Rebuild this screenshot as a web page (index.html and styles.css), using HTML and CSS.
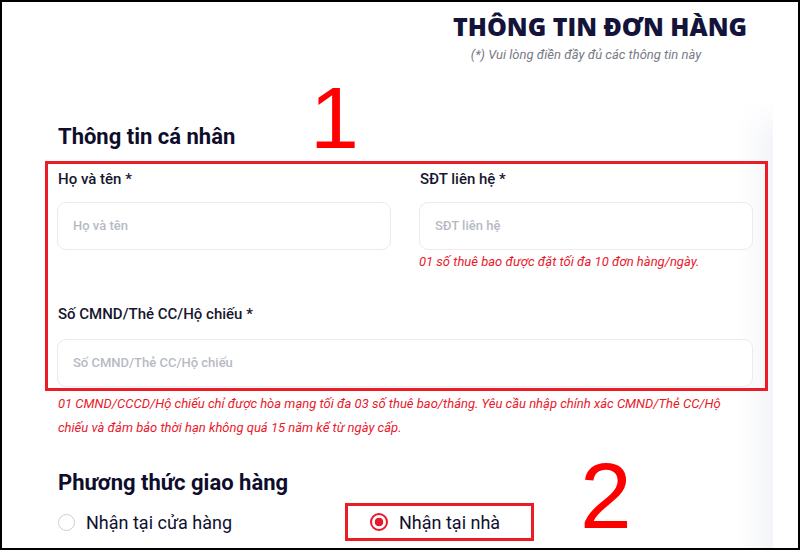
FILE: index.html
```html
<!DOCTYPE html>
<html lang="vi">
<head>
<meta charset="utf-8">
<title>Thông tin đơn hàng</title>
<link rel="stylesheet" href="styles.css">
</head>
<body>
<div class="frame">
  <header class="head">
    <h1 class="title">THÔNG TIN ĐƠN HÀNG</h1>
    <p class="subtitle">(*) Vui lòng điền đầy đủ các thông tin này</p>
  </header>
  <main class="card">
    <h2 class="section-title">Thông tin cá nhân</h2>
    <div class="box-personal">
      <div class="fields">
        <div class="field">
          <label class="label">Họ và tên *</label>
          <div class="input">Họ và tên</div>
        </div>
        <div class="field">
          <label class="label">SĐT liên hệ *</label>
          <div class="input">SĐT liên hệ</div>
          <p class="note">01 số thuê bao được đặt tối đa 10 đơn hàng/ngày.</p>
        </div>
        <div class="field field-wide">
          <label class="label">Số CMND/Thẻ CC/Hộ chiếu *</label>
          <div class="input">Số CMND/Thẻ CC/Hộ chiếu</div>
        </div>
      </div>
    </div>
    <p class="note note-id">01 CMND/CCCD/Hộ chiếu chỉ được hòa mạng tối đa 03 số thuê bao/tháng. Yêu cầu nhập chính xác CMND/Thẻ CC/Hộ chiếu và đảm bảo thời hạn không quá 15 năm kể từ ngày cấp.</p>
    <h2 class="section-title section-ship">Phương thức giao hàng</h2>
    <div class="options">
      <div class="option option-store"><span class="radio"></span><span>Nhận tại cửa hàng</span></div>
      <div class="option option-home"><span class="radio radio-on"></span><span>Nhận tại nhà</span></div>
    </div>
  </main>
  <span class="mark mark-1">1</span>
  <span class="mark mark-2">2</span>
</div>
</body>
</html>
```
FILE: styles.css
```css
html, body {
  margin: 0;
  padding: 0;
  background: #fff;
}
.frame {
  position: relative;
  box-sizing: border-box;
  width: 800px;
  height: 550px;
  border: 2px solid #000;
  overflow: hidden;
  font-family: Roboto, "Liberation Sans", sans-serif;
  color: #10102e;
}
.head {
  padding-top: 9px;
  margin-left: 398px;
  width: 400px;
  text-align: center;
}
.title {
  margin: 0;
  font-family: "Open Sans", "Liberation Sans", sans-serif;
  font-weight: 800;
  font-size: 25px;
  line-height: 30px;
  color: #14143a;
}
.subtitle {
  margin: 5px 0 0;
  padding-right: 28px;
  font-size: 13px;
  line-height: 18px;
  font-style: italic;
  color: #777a85;
}
.card {
  margin-top: 36px;
  width: 771px;
  height: 460px;
  background:
    linear-gradient(to bottom, #fff 0, rgba(255,255,255,0) 40px),
    linear-gradient(to right, #fff 0, #fff 735px, #f4f5f9 771px);
}
.section-title {
  margin: 0;
  padding-top: 23px;
  padding-left: 56px;
  font-size: 22px;
  line-height: 28px;
  font-weight: 700;
  color: #0e0e2c;
}
.box-personal {
  margin: 10px 0 0 43px;
  width: 723px;
  box-sizing: border-box;
  border: 3px solid #ec1c27;
  padding: 5px 12px 1px 9px;
}
.fields {
  display: grid;
  grid-template-columns: 334px 334px;
  column-gap: 28px;
  row-gap: 32px;
}
.field-wide {
  grid-column: 1 / 3;
}
.label {
  display: block;
  padding-left: 1px;
  font-size: 15px;
  line-height: 20px;
  font-weight: 500;
  color: #16162e;
}
.input {
  box-sizing: border-box;
  height: 48px;
  margin-top: 13px;
  border: 1px solid #ebebee;
  border-radius: 9px;
  padding-left: 15px;
  font-size: 13px;
  line-height: 46px;
  font-weight: 500;
  color: #b7bac4;
  background: #fff;
}
.field-wide .input {
  margin-top: 15px;
}
.note {
  margin: 2px 0 0;
  font-size: 13px;
  line-height: 20px;
  font-style: italic;
  color: #e8192c;
}
.note-id {
  margin: 1px 0 0 56px;
  width: 696px;
  line-height: 24px;
}
.section-ship {
  padding-top: 29px;
}
.options {
  display: flex;
  align-items: center;
  margin-top: 6px;
  padding-left: 56px;
  font-size: 18px;
  color: #10102e;
}
.option {
  display: flex;
  align-items: center;
  gap: 11px;
}
.option-store {
  width: 287px;
}
.option-home {
  box-sizing: border-box;
  height: 38px;
  border: 3px solid #ec1c27;
  padding: 0 31px 0 22px;
}
.radio {
  box-sizing: border-box;
  width: 17px;
  height: 17px;
  border-radius: 50%;
  border: 1.5px solid #cfcfd4;
  background: #fff;
}
.radio-on {
  width: 18px;
  height: 18px;
  border: 2px solid #e8192c;
  background: radial-gradient(circle, #e8192c 0, #e8192c 4px, #fff 4.6px);
}
.mark {
  position: absolute;
  font-family: "Liberation Sans", Arial, sans-serif;
  font-size: 88px;
  line-height: 1;
  color: #ff0000;
}
.mark-1 {
  left: 308px;
  top: 72px;
}
.mark-2 {
  left: 578px;
  top: 448px;
  font-size: 93px;
}
```
